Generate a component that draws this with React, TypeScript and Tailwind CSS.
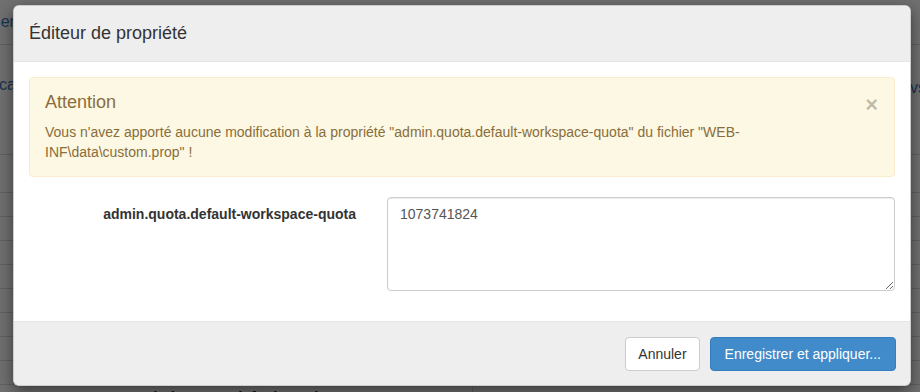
import React from "react";

const tableRows = [193, 217, 241, 265, 289, 313, 337, 361];

const BackgroundPage = () => {
  return (
    <div className="flex flex-col w-full h-full overflow-hidden bg-white text-[14px] text-[#333]">
      <div className="shrink-0 h-[45px] border-b border-[#ddd] flex items-center overflow-hidden">
        <span className="-ml-[10px] text-[#337ab7] text-[16px]">Serveur</span>
      </div>
      <div className="shrink-0 h-[110px] border-b border-[#ddd] flex items-center justify-between overflow-hidden">
        <span className="-ml-[1px] text-[#337ab7] text-[16px] pb-[30px]">ca</span>
        <span className="text-[#337ab7] text-[16px] pb-[24px] mr-[-6px]">vs</span>
      </div>
      <div className="shrink-0 h-[38px] border-b border-[#ddd]" />
      {tableRows.map((y) => (
        <div key={y} className="shrink-0 h-[24px] border-b border-[#ddd] flex">
          <div className="w-[473px] border-r border-[#ddd]" />
        </div>
      ))}
      <div className="shrink-0 flex h-[24px] items-center">
        <div className="w-[473px] border-r border-[#ddd] pl-[140px] font-bold text-[15px] text-[#222]">
          admin.quota.default-workspace-quota
        </div>
        <div className="pl-[12px] font-bold text-[#222]">10</div>
      </div>
    </div>
  );
};

const App = () => {
  return (
    <div className="relative w-[920px] h-[392px] overflow-hidden font-['Liberation_Sans',Arial,sans-serif]">
      <BackgroundPage />
      <div className="absolute inset-0 bg-black/[0.56]" />

      <div className="absolute left-[13px] top-[5px] w-[898px] bg-white border border-black/20 rounded-[6px] shadow-[0_5px_15px_rgba(0,0,0,0.5)] text-[14px] leading-[20px] text-[#333]">
        <div className="bg-[#eeeeee] border-b border-[#e5e5e5] rounded-t-[6px] px-[15px] py-[15px]">
          <h4 className="text-[18px] leading-[25px] text-[#333]">Éditeur de propriété</h4>
        </div>

        <div className="p-[15px]">
          <div className="flex items-start bg-[#fcf8e3] border border-[#faebcc] rounded-[4px] px-[15px] pt-[14px] pb-[14px] text-[#8a6d3b]">
            <div className="flex-1 pr-[10px]">
              <h4 className="text-[18px] leading-[20px] mb-[10px]">Attention</h4>
              <p>
                Vous n'avez apporté aucune modification à la propriété "admin.quota.default-workspace-quota" du fichier "WEB-INF\data\custom.prop" !
              </p>
            </div>
            <button className="text-[22px] font-bold leading-[20px] text-black/25 mr-[1px] mt-[3px]">×</button>
          </div>

          <div className="flex mt-[20px] mb-[15px]">
            <label className="w-[327px] text-right font-bold pt-[7px]">
              admin.quota.default-workspace-quota
            </label>
            <div className="ml-[31px] flex-1">
              <textarea
                className="block w-full h-[94px] border border-[#ccc] rounded-[4px] px-[12px] py-[6px] text-[#555] text-[14px] leading-[20px] shadow-[inset_0_1px_1px_rgba(0,0,0,0.075)] outline-none"
                defaultValue="1073741824"
              />
            </div>
          </div>
        </div>

        <div className="bg-[#eeeeee] border-t border-[#e5e5e5] rounded-b-[6px] pl-[15px] pr-[14px] pt-[15px] pb-[14px] flex justify-end gap-[10px]">
          <button className="h-[34px] px-[12px] bg-white border border-[#ccc] rounded-[4px] text-[#333] text-[14px]">
            Annuler
          </button>
          <button className="h-[34px] px-[14px] bg-[#428bca] border border-[#357ebd] rounded-[4px] text-white text-[14px]">
            Enregistrer et appliquer...
          </button>
        </div>
      </div>
    </div>
  );
};

export default App;
